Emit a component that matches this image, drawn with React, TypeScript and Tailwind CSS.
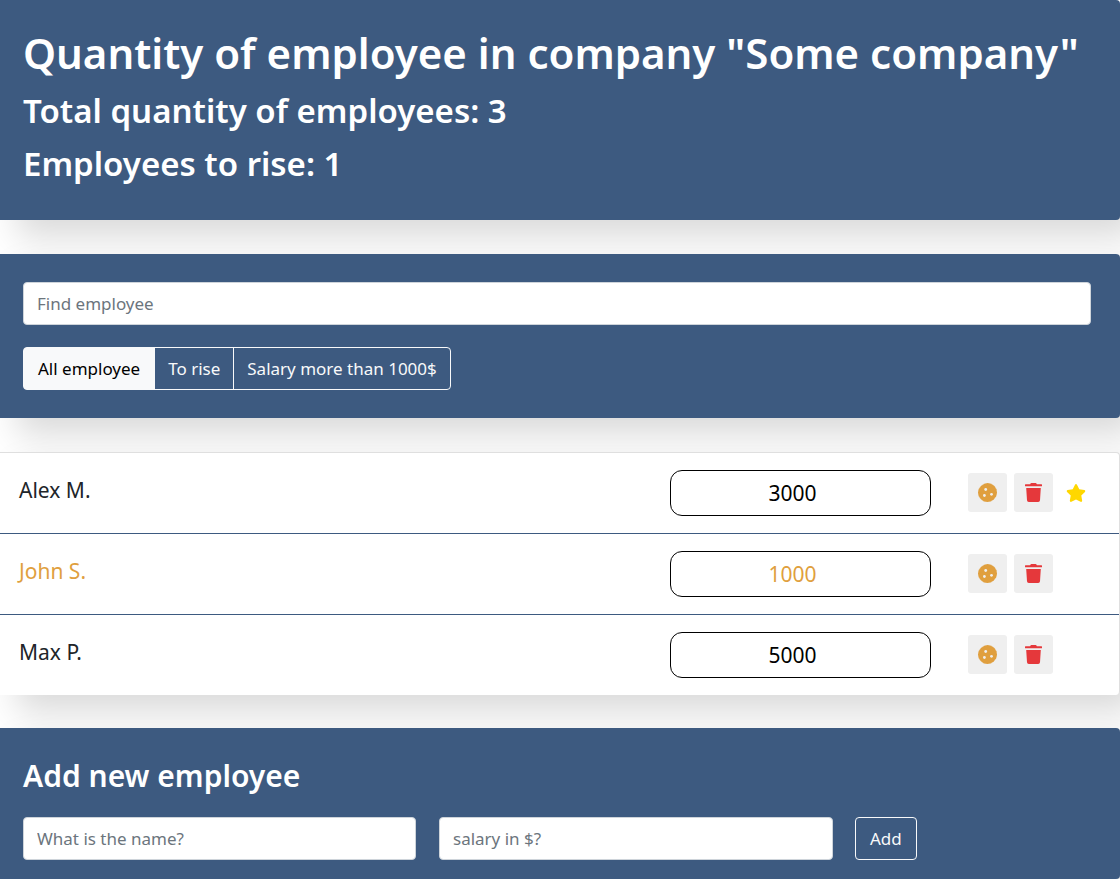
import React, { useState } from 'react';
import { FaStar } from 'react-icons/fa';

const panel = 'rounded-r bg-[#3d5a80] text-white shadow-[17px_17px_34px_rgba(0,0,0,0.15)]';
const field =
  'h-[43px] rounded border border-[#ced4da] bg-white px-[13px] text-[17px] text-[#212529] placeholder:text-[#6c757d]';
const iconButton = 'grid size-[39px] place-items-center rounded-[3px] bg-[#efefef]';

const employees = [
  { name: 'Alex M.', salary: '3000', increase: false, rise: true },
  { name: 'John S.', salary: '1000', increase: true, rise: false },
  { name: 'Max P.', salary: '5000', increase: false, rise: false },
];

const filters = ['All employee', 'To rise', 'Salary more than 1000$'];

function CookieIcon() {
  return (
    <svg width="19" height="19" viewBox="0 0 19 19" fill="currentColor" aria-hidden="true">
      <path d="M6.2.9 9.6 0l3.6.9 3.1 2.1 2 3.2.7 3.6-1 3.5-2.2 3-3 2-3.4.7-3.6-.8-3-2.1-2-3L0 9.5.9 6l2.2-3z" stroke="currentColor" strokeWidth=".3" strokeLinejoin="round" />
      <circle cx="7.7" cy="6.5" r="1.4" fill="#efefef" />
      <circle cx="6.4" cy="12.5" r="1.4" fill="#efefef" />
      <circle cx="13.5" cy="11.3" r="1.4" fill="#efefef" />
    </svg>
  );
}

function TrashIcon() {
  return (
    <svg width="17" height="19" viewBox="0 0 17 19" fill="currentColor" aria-hidden="true">
      <path d="M.5 1.2h4.6l.4-.8Q5.7 0 6.3 0h4.4q.6 0 .8.4l.4.8h4.600q.5 0 .5.5v1.300q0 .3-.5.3H.5Q0 3.300 0 3V1.700q0-.5.5-.5z" />
      <path d="M1.200 4.900h14.600l-.8 12.400q-.1 1.700-1.800 1.700H3.800Q2.100 19 2 17.300z" />
    </svg>
  );
}

export default function App() {
  const [active, setActive] = useState(0);
  return (
    <main className="overflow-hidden bg-white font-['Noto_Sans','Open_Sans',sans-serif] text-[#212529]">
      <header className={`${panel} px-[23px] pt-[26px] pb-[34px]`}>
        <h1 className="mb-2 text-[42px] leading-[54px] font-semibold">Quantity of employee in company "Some company"</h1>
        <h2 className="mb-2 text-[33px] leading-[45px] font-semibold">Total quantity of employees: 3</h2>
        <h2 className="text-[33px] leading-[45px] font-semibold">Employees to rise: 1</h2>
      </header>

      <section className={`${panel} mt-[34px] py-7 pr-[29px] pl-[23px]`}>
        <input aria-label="Find employee" placeholder="Find employee" className={`${field} block w-full`} />
        <div className="mt-[22px] flex">
          {filters.map((label, i) => (
            <button
              key={label}
              type="button"
              onClick={() => setActive(i)}
              className={`-ml-px h-[43px] border border-[#f8f9fa] px-[13px] text-[17px] first:ml-0 first:rounded-l first:px-[14px] last:rounded-r ${
                active === i ? 'bg-[#f8f9fa] text-black' : 'text-[#f8f9fa]'
              }`}
            >
              {label}
            </button>
          ))}
        </div>
      </section>

      <ul className="mt-[34px] rounded-r border-t border-r border-[#dfdfdf] bg-white shadow-[17px_17px_34px_rgba(0,0,0,0.15)]">
        {employees.map((e) => (
          <li
            key={e.name}
            className={`flex h-[81px] items-start border-b border-[#3d5a80] pt-[17px] pl-[19px] last:h-20 last:border-b-0 ${
              e.increase ? 'text-[#e09f3e]' : ''
            }`}
          >
            <span className="flex-1 text-[21px] leading-[40px]">{e.name}</span>
            <input
              aria-label={`Salary of ${e.name}`}
              defaultValue={e.salary}
              className={`h-[46px] w-[261px] rounded-xl border border-black pr-4 text-center text-[21px] ${
                e.increase ? 'text-[#e09f3e]' : 'text-black'
              }`}
            />
            <div className="ml-[37px] flex w-[151px] items-center gap-[7px] pt-[3px]">
              <button type="button" aria-label="Increase" className={`${iconButton} text-[#e09f3e]`}>
                <CookieIcon />
              </button>
              <button type="button" aria-label="Delete" className={`${iconButton} text-[#e5383b]`}>
                <TrashIcon />
              </button>
              {e.rise && <FaStar size={20} className="ml-[6px] text-[#ffd700]" />}
            </div>
          </li>
        ))}
      </ul>

      <section className={`${panel} mt-[33px] px-[23px] pt-[27px] pb-[19px]`}>
        <h3 className="text-[30px] leading-[42px] font-semibold">Add new employee</h3>
        <form className="mt-5 flex" onSubmit={(ev) => ev.preventDefault()}>
          <input aria-label="Name" placeholder="What is the name?" className={`${field} mr-[23px] w-[393px]`} />
          <input aria-label="Salary" placeholder="salary in $?" className={`${field} mr-[22px] w-[394px]`} />
          <button type="submit" className="h-[43px] rounded border border-[#f8f9fa] px-[14px] text-[17px] text-[#f8f9fa]">
            Add
          </button>
        </form>
      </section>
    </main>
  );
}
